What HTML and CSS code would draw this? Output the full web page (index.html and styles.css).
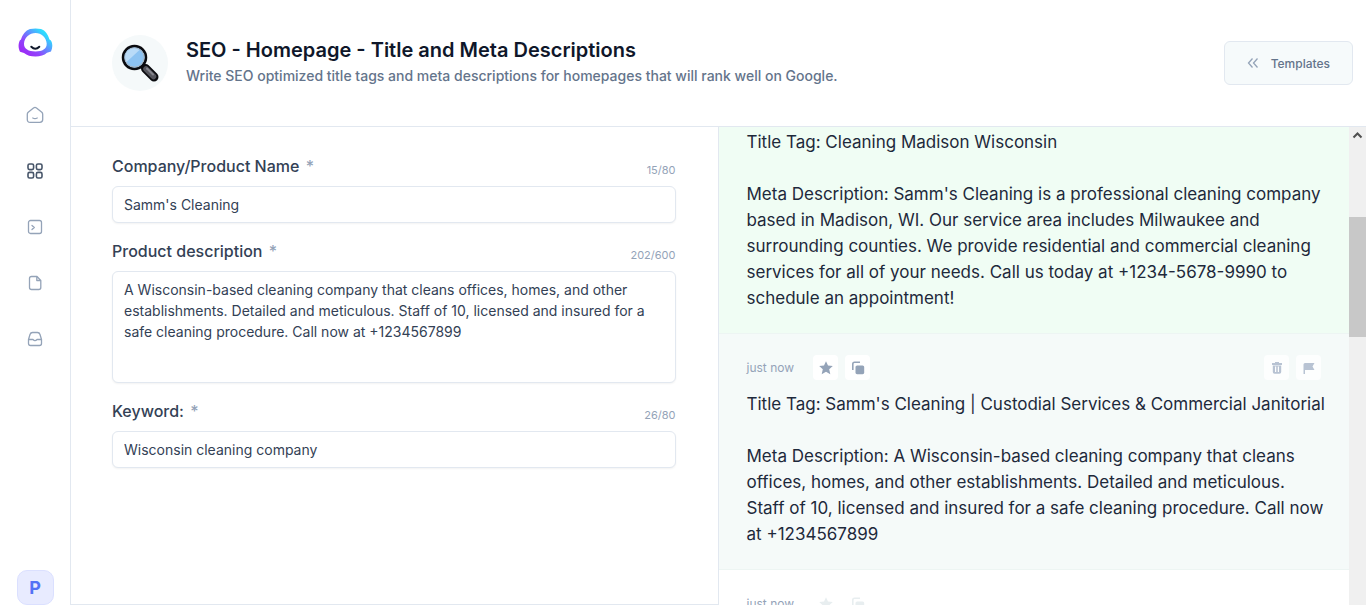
FILE: index.html
```html
<!DOCTYPE html>
<html lang="en">
<head>
    <meta charset="UTF-8">
    <meta name="viewport" content="width=device-width, initial-scale=1.0">
    <title>SEO - Homepage - Title and Meta Descriptions</title>
    <link rel="stylesheet" href="styles.css">
</head>
<body>

    <svg class="sprite" aria-hidden="true">
        <symbol id="star" viewBox="0 0 14 14"><path fill="currentColor" d="M7 .2l2 4.400 4.800.5-3.600 3.200 1.100 5L7 10.800l-4.300 2.500 1.100-5L.2 5.100l4.800-.5z"/></symbol>
        <symbol id="copy" viewBox="0 0 14 14"><path fill="none" stroke="currentColor" stroke-width="1.6" d="M1.800 9V3q0-1.700 1.700-1.700H9"/><rect x="4.500" y="4.500" width="8.700" height="8.700" rx="1.600" fill="currentColor"/></symbol>
        <symbol id="trash" viewBox="0 0 14 14"><path fill="currentColor" fill-rule="evenodd" d="M5 1h4v1h3v2H2V2h3zM2.800 4.500h8.400V11q0 1.800-1.800 1.800H4.600Q2.800 12.800 2.800 11zM5 5.500v5.500h1.200V5.500zm2.800 0v5.500H9V5.500z"/></symbol>
        <symbol id="flag" viewBox="0 0 14 14"><path fill="currentColor" d="M1.500 13V3.500Q1.500 2 3 2h9.500l-2 3.500 2 3.500H3v4z"/></symbol>
    </svg>

    <nav class="sidebar">
        <a class="logo" href="#" aria-label="Home page">
            <svg width="35" height="29" viewBox="0 0 35 29">
                <defs>
                    <linearGradient id="brand" x1="0.1" y1="0.8" x2="0.8" y2="0.15">
                        <stop offset="0" stop-color="#9b2cf6"/>
                        <stop offset="0.3" stop-color="#9145fb"/>
                        <stop offset="0.6" stop-color="#6488ff"/>
                        <stop offset="0.95" stop-color="#2ddcff"/>
                    </linearGradient>
                </defs>
                <path fill="url(#brand)" fill-rule="evenodd" d="M12 1q5.500-1.200 11 0c4.500 1.500 7 5.500 8.500 10.500q1.700.5 2.200 2.500c1 3 .8 6.500-.7 9.500l-4 1.200c-3 2.500-6.500 3.800-11.500 3.800s-8.500-1-11.500-3.500l-4-1.200C.5 21 .2 17.500 1 14.500q.5-2.500 2-3C4.500 6.500 7.500 2.500 12 1zM17.500 5C11.500 5 6.500 9.500 6 15.500c-.2 5.700 4.500 8 11.500 8s11.400-2.300 11.200-8C28.200 9.500 23.500 5 17.500 5z"/>
                <path fill="none" stroke="#0f172a" stroke-width="2" stroke-linecap="round" d="M13.300 18.800q4 4 8 0"/>
            </svg>
        </a>
        <a class="nav-link" href="#" aria-label="Dashboard">
            <svg width="18" height="18" viewBox="0 0 18 18"><path d="M2.200 6.200L7.500 2q1.500-1.200 3 0l5.300 4.200q.9.800.9 2v5.300q0 2.800-2.800 2.800H4.100q-2.800 0-2.800-2.800V8.200q0-1.200.9-2z"/><path d="M6.800 12q2.200 1.200 4.400 0"/></svg>
        </a>
        <a class="nav-link active" href="#" aria-label="Templates">
            <svg width="18" height="18" viewBox="0 0 18 18"><rect x="2" y="2" width="5.600" height="5.600" rx="1.600"/><rect x="10.400" y="2" width="5.600" height="5.600" rx="1.600"/><rect x="2" y="10.400" width="5.600" height="5.600" rx="1.600"/><rect x="10.400" y="10.400" width="5.600" height="5.600" rx="1.600"/></svg>
        </a>
        <a class="nav-link" href="#" aria-label="Commands">
            <svg width="18" height="18" viewBox="0 0 18 18"><rect x="2.500" y="2.500" width="13" height="13" rx="2"/><path d="M6 7.500l2.300 2-2.300 2"/></svg>
        </a>
        <a class="nav-link" href="#" aria-label="Documents">
            <svg width="18" height="18" viewBox="0 0 18 18"><path d="M5.500 2.500H11L14.800 6.500v7q0 2-2 2H5.500q-2 0-2-2v-9q0-2 2-2zM10.800 2.500V6.500h4"/></svg>
        </a>
        <a class="nav-link" href="#" aria-label="Inbox">
            <svg width="18" height="18" viewBox="0 0 18 18"><path d="M2.500 9.500L4 4.500q.6-2 2.500-2h5q1.900 0 2.500 2l1.500 5v4q0 2-2 2h-9q-2 0-2-2zM2.500 9.500H7q2 2.200 4 0h4.500"/></svg>
        </a>
        <a class="avatar" href="#">P</a>
    </nav>

    <div class="page">
        <header class="header">
            <div class="template-icon">
                <svg width="38" height="38" viewBox="0 0 38 38">
                    <path stroke="#0b0b0f" stroke-width="9" stroke-linecap="round" d="M24.500 24.500L33 33"/>
                    <path stroke="#0b0b0f" stroke-width="4" d="M20 20l5 5"/>
                    <path stroke="#55555d" stroke-width="5.500" stroke-linecap="round" d="M25 25l7.500 7.500"/>
                    <path stroke="#85858d" stroke-width="2" stroke-linecap="round" d="M26 24.500l6 6"/>
                    <circle cx="13.500" cy="13.500" r="11.500" fill="#8dc3f2" stroke="#0b0b0f" stroke-width="2.500"/>
                    <circle cx="13.500" cy="13.500" r="9.600" fill="none" stroke="#a9b4bf" stroke-width="1"/>
                    <path fill="#b9dbf8" d="M5.500 18A9 9 0 0 1 18.500 6z"/>
                </svg>
            </div>
            <div class="header-text">
                <h1>SEO - Homepage - Title and Meta Descriptions</h1>
                <p>Write SEO optimized title tags and meta descriptions for homepages that will rank well on Google.</p>
            </div>
            <a class="back-button" href="#">
                <svg width="12" height="12" viewBox="0 0 12 12"><path d="M5.500 1.500L1.500 6l4 4.500M10.500 1.500L6.500 6l4 4.500"/></svg>
                Templates
            </a>
        </header>

        <main class="content">
            <form class="inputs">
                <div class="field">
                    <div class="field-head">
                        <label for="company">Company/Product Name <span>*</span></label>
                        <small>15/80</small>
                    </div>
                    <input type="text" id="company" value="Samm's Cleaning">
                </div>
                <div class="field">
                    <div class="field-head">
                        <label for="description">Product description <span>*</span></label>
                        <small>202/600</small>
                    </div>
                    <textarea id="description">A Wisconsin-based cleaning company that cleans offices, homes, and other establishments. Detailed and meticulous. Staff of 10, licensed and insured for a safe cleaning procedure. Call now at +1234567899</textarea>
                </div>
                <div class="field">
                    <div class="field-head">
                        <label for="keyword">Keyword: <span>*</span></label>
                        <small>26/80</small>
                    </div>
                    <input type="text" id="keyword" value="Wisconsin cleaning company">
                </div>
            </form>

            <section class="results">
                <div class="result-list">
                    <article class="result new">
                        <p class="result-title">Title Tag: Cleaning Madison Wisconsin</p>
                        <p>Meta Description: Samm's Cleaning is a professional cleaning company based in Madison, WI. Our service area includes Milwaukee and surrounding counties. We provide residential and commercial cleaning services for all of your needs. Call us today at +1234-5678-9990 to schedule an appointment!</p>
                    </article>
                    <article class="result hovered">
                        <div class="result-bar">
                            <time>just now</time>
                            <button type="button" aria-label="Favorite"><svg width="14" height="14"><use href="#star"/></svg></button>
                            <button type="button" aria-label="Copy"><svg width="14" height="14"><use href="#copy"/></svg></button>
                            <button class="faded first" type="button" aria-label="Delete"><svg width="14" height="14"><use href="#trash"/></svg></button>
                            <button class="faded" type="button" aria-label="Flag"><svg width="14" height="14"><use href="#flag"/></svg></button>
                        </div>
                        <p class="result-title">Title Tag: Samm's Cleaning | Custodial Services &amp; Commercial Janitorial</p>
                        <p>Meta Description: A Wisconsin-based cleaning company that cleans offices, homes, and other establishments. Detailed and meticulous. Staff of 10, licensed and insured for a safe cleaning procedure. Call now at +1234567899</p>
                    </article>
                    <article class="result">
                        <div class="result-bar">
                            <time>just now</time>
                            <button type="button" aria-label="Favorite"><svg width="14" height="14"><use href="#star"/></svg></button>
                            <button type="button" aria-label="Copy"><svg width="14" height="14"><use href="#copy"/></svg></button>
                        </div>
                    </article>
                </div>
                <div class="scrollbar">
                    <svg width="17" height="17" viewBox="0 0 17 17"><path fill="none" stroke="#505050" stroke-width="2" d="M4.500 10.500l4-4 4 4"/></svg>
                    <div class="thumb"></div>
                </div>
            </section>
        </main>
    </div>

</body>
</html>
```

FILE: styles.css
```css
* {
    box-sizing: border-box;
}

body {
    display: flex;
    height: 100vh;
    margin: 0;
    overflow: hidden;
    font-family: "Inter", sans-serif;
    color: #1e293b;
    background: #fff;
}

h1, p {
    margin: 0;
}

a {
    text-decoration: none;
}

svg {
    display: block;
}

.sprite {
    display: none;
}

/* sidebar */
.sidebar {
    display: flex;
    flex-direction: column;
    align-items: center;
    flex-shrink: 0;
    width: 71px;
    padding-top: 28px;
    border-right: 1px solid #e2e8f0;
}

.logo {
    margin-bottom: 30px;
}

.nav-link {
    display: flex;
    align-items: center;
    justify-content: center;
    width: 56px;
    height: 56px;
    color: #94a3b8;
}

.nav-link.active {
    color: #475569;
}

.nav-link svg {
    fill: none;
    stroke: currentColor;
    stroke-width: 1.3;
    stroke-linejoin: round;
    stroke-linecap: round;
}

.nav-link.active svg {
    stroke-width: 1.6;
}

.avatar {
    display: flex;
    align-items: center;
    justify-content: center;
    width: 37px;
    height: 35px;
    margin-top: auto;
    flex-shrink: 0;
    border: 1px solid #dbe0ff;
    border-radius: 10px;
    background: #e8ebff;
    color: #5472f5;
    font-size: 18px;
    font-weight: 700;
}

/* header */
.page {
    display: flex;
    flex-direction: column;
    flex: 1;
    min-width: 0;
}

.header {
    display: flex;
    align-items: center;
    flex-shrink: 0;
    height: 127px;
    padding: 0 13px 0 41px;
    border-bottom: 1px solid #e2e8f0;
}

.template-icon {
    display: flex;
    align-items: center;
    justify-content: center;
    width: 56px;
    height: 56px;
    margin-right: 18px;
    border-radius: 50%;
    background: #f5f9fa;
}

.header-text {
    flex: 1;
    padding-bottom: 2px;
}

h1 {
    font-size: 20px;
    line-height: 28px;
    font-weight: 600;
    color: #0f172a;
}

.header-text p {
    font-size: 14px;
    line-height: 24px;
    font-weight: 500;
    color: #64748b;
}

.back-button {
    display: flex;
    align-items: center;
    gap: 12px;
    height: 44px;
    padding: 0 22px;
    border: 1px solid #e2e8f0;
    border-radius: 6px;
    background: #f6fafb;
    color: #64748b;
    font-size: 12px;
    font-weight: 500;
}

.back-button svg {
    fill: none;
    stroke: #94a3b8;
    stroke-width: 1.3;
}

/* form */
.content {
    display: grid;
    grid-template-columns: minmax(0, 1fr) minmax(0, 1fr);
    flex: 1;
    min-height: 0;
}

.inputs {
    display: flex;
    flex-direction: column;
    gap: 16px;
    padding: 27px 42px 0 41px;
    border-right: 1px solid #e2e8f0;
    border-bottom: 1px solid #e2e8f0;
}

.field {
    display: flex;
    flex-direction: column;
    gap: 8px;
}

.field-head {
    display: flex;
    justify-content: space-between;
    align-items: flex-end;
}

label {
    font-size: 16px;
    line-height: 24px;
    font-weight: 500;
    color: #334155;
}

label span {
    margin-left: 2px;
    color: #94a3b8;
}

small {
    font-size: 11px;
    line-height: 16px;
    color: #94a3b8;
}

input, textarea {
    display: block;
    width: 100%;
    height: 37px;
    padding: 0 11px;
    border: 1px solid #e2e8f0;
    border-radius: 6px;
    box-shadow: 0 1px 2px rgba(0, 0, 0, 0.05);
    background: #fff;
    color: #334155;
    font-family: inherit;
    font-size: 14px;
    line-height: 21px;
}

textarea {
    height: 112px;
    padding: 7px 11px;
    resize: none;
}

/* results */
.results {
    display: flex;
    min-height: 0;
}

.result-list {
    flex: 1;
    min-width: 0;
    overflow: hidden;
}

.result {
    padding: 21px 22px 22px 28px;
    border-top: 1px solid #edf5f3;
}

.result.new {
    padding-top: 2px;
    border-top: 0;
    background: #f0fdf4;
}

.result.hovered {
    background: #f5faf9;
}

.result p {
    font-size: 17px;
    line-height: 26px;
}

.result p + p {
    margin-top: 26px;
}

.result-title {
    white-space: nowrap;
}

.result-bar {
    display: flex;
    align-items: center;
    gap: 7px;
    margin-bottom: 11px;
    padding-right: 6px;
}

time {
    margin-right: 12px;
    font-size: 12px;
    color: #94a3b8;
}

.result-bar button {
    display: flex;
    align-items: center;
    justify-content: center;
    width: 25px;
    height: 25px;
    padding: 0;
    border: 0;
    border-radius: 4px;
    background: #fff;
    color: #e8eef0;
}

.hovered button {
    color: #94a3b8;
}

.result-bar .faded {
    background: #fdfefe;
    color: #b8c3d3;
}

.result-bar .first {
    margin-left: auto;
}

.scrollbar {
    width: 17px;
    background: #f0f0f0;
}

.thumb {
    height: 120px;
    margin-top: 73px;
    background: #c8c8c8;
}
```
